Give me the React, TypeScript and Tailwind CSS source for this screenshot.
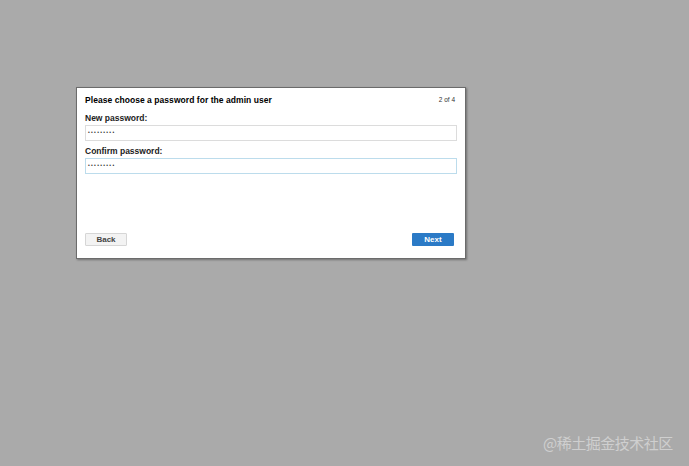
import React from 'react';

export default function App() {
  return (
    <div className="relative w-[689px] h-[466px] bg-[#aaaaaa] font-['Liberation_Sans',Arial,sans-serif] overflow-hidden">
      <div className="absolute left-[76px] top-[87px] w-[390px] h-[172px] bg-white border border-[#6b6b6b] shadow-[1px_1px_2px_rgba(0,0,0,0.35)] flex flex-col px-[8px] pt-[6px] pb-[12px]">
        <div className="flex items-center justify-between h-[12px]">
          <span className="text-[8.5px] font-bold text-black tracking-[0.05px]">Please choose a password for the admin user</span>
          <span className="text-[6.5px] text-[#333] mr-[2px]">2 of 4</span>
        </div>
        <label className="mt-[6px] text-[8.5px] font-bold text-[#222] h-[12px] leading-[12px]">New password:</label>
        <div className="mt-[1px] h-[16px] border border-[#dcdcdc] flex items-center px-[2px] text-[5px] text-[#333] tracking-[1.3px]">
          •••••••••
        </div>
        <label className="mt-[4px] text-[8.5px] font-bold text-[#222] h-[12px] leading-[12px]">Confirm password:</label>
        <div className="mt-[1px] h-[16px] border border-[#bcdcec] flex items-center px-[2px] text-[5px] text-[#333] tracking-[1.3px]">
          •••••••••
        </div>
        <div className="mt-auto flex items-center justify-between pr-[3px]">
          <button className="w-[42px] h-[13px] bg-[#f3f3f3] border border-[#d6d6d6] rounded-[1px] text-[8px] font-bold text-[#444] leading-none">Back</button>
          <button className="w-[42px] h-[13px] bg-[#2b7ac6] rounded-[1px] text-[8px] font-bold text-white leading-none">Next</button>
        </div>
      </div>
      <div className="absolute left-[543px] top-[432px] text-[15px] text-[#cfcfcf] font-['Noto_Sans_CJK_SC',sans-serif] tracking-[-0.5px]">
        @稀土掘金技术社区
      </div>
    </div>
  );
}
